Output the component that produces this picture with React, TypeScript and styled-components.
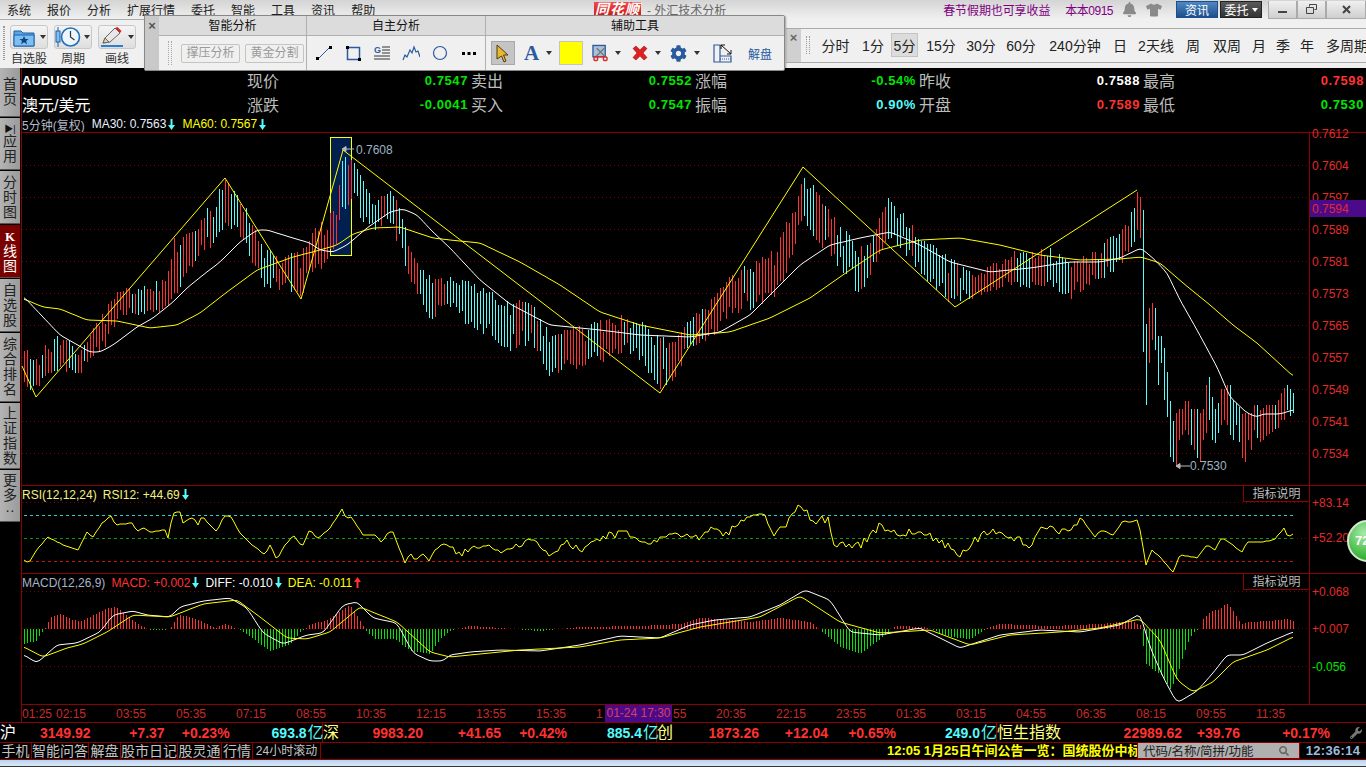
import React from "react";
import styled, { createGlobalStyle } from "styled-components";
import { FaBell, FaCog, FaSearch, FaTshirt, FaWrench } from "react-icons/fa";

const FONT = '"Liberation Sans", "Noto Sans CJK SC", sans-serif';
const LINE = "#8b0000";
const GRID = "#780000";
const AXIS = "#e02b2b";
const RED = "#ff3232";
const GREEN = "#00e600";
const CYAN = "#54fcfc";
const YELLOW = "#ffff00";

type Pt = [number, number];

const GlobalStyle = createGlobalStyle`
  html, body { margin: 0; padding: 0; background: #000; overflow: hidden; }
  * { box-sizing: border-box; }
`;

const Page = styled.div`
  position: relative;
  width: 1366px;
  height: 767px;
  overflow: hidden;
  background: #000;
  font-family: ${FONT};
  display: flex;
  flex-direction: column;
`;

/* title bar */
const TitleBar = styled.div`
  height: 19px;
  flex: none;
  display: flex;
  align-items: center;
  background: linear-gradient(#d4d4d4, #f0f0f0);
  font-size: 12px;
  color: #222;
`;
const Menu = styled.div`
  width: 594px;
  padding-left: 7px;
  display: flex;
  gap: 16px;
`;
const Logo = styled.span`
  width: 47px;
  height: 15px;
  line-height: 15px;
  text-align: center;
  color: #fff;
  font-weight: bold;
  font-style: italic;
  font-size: 14px;
  letter-spacing: 1px;
  background: linear-gradient(#f24b4b, #c81414);
`;
const AppName = styled.span`
  margin-left: 6px;
  color: #666;
`;
const TitleRight = styled.div`
  margin-left: auto;
  display: flex;
  align-items: center;
  height: 100%;
`;
const Promo = styled.span<{ $ml: number }>`
  margin-left: ${(p) => p.$ml}px;
  color: #800080;
  letter-spacing: -0.1px;
`;
const Account = styled(Promo)`
  letter-spacing: -0.5px;
`;
const GrayIcon = styled.span<{ $ml: number; $size: number }>`
  margin-left: ${(p) => p.$ml}px;
  display: flex;
  color: #8a8a8a;
  font-size: ${(p) => p.$size}px;
`;
const BarButton = styled.span<{ $dark?: boolean; $ml: number }>`
  margin-left: ${(p) => p.$ml}px;
  width: 42px;
  height: 17px;
  display: flex;
  align-items: center;
  justify-content: center;
  gap: 3px;
  color: #fff;
  font-size: 12px;
  border: 1px solid ${(p) => (p.$dark ? "#222" : "#1d4f8c")};
  background: ${(p) =>
    p.$dark ? "linear-gradient(#5a5a5a, #333)" : "linear-gradient(#4f88c4, #1d4f8c)"};
`;
const WinButtons = styled.div`
  margin-left: 6px;
  display: flex;
  height: 18px;
`;
const WinButton = styled.span<{ $w: number }>`
  width: ${(p) => p.$w}px;
  display: flex;
  align-items: center;
  justify-content: center;
  border: 1px solid #aaa;
  border-top: 0;
  background: linear-gradient(#f0f0f0, #cfcfcf);
`;

/* tool rows */
const ToolRow = styled.div`
  height: 49px;
  flex: none;
  display: flex;
  background: #f0f0f0;
`;
const LeftTools = styled.div`
  flex: 0 0 144px;
  padding: 5px 0 0 3px;
  display: flex;
  gap: 6px;
  border-top: 1px solid #aaa;
`;
const Grip = styled.span`
  width: 2px;
  height: 34px;
  margin-top: 1px;
  margin-right: -1px;
  border-left: 1px dotted #999;
  border-right: 1px dotted #999;
`;
const ToolGroup = styled.div`
  width: 38px;
  display: flex;
  flex-direction: column;
  align-items: center;
  font-size: 12px;
  color: #333;
  line-height: 17px;
`;
const SplitButton = styled.div`
  width: 38px;
  height: 25px;
  margin-bottom: 2px;
  display: grid;
  grid-template-columns: 26px 11px;
  align-items: center;
  justify-items: center;
  border: 1px solid #c8c8c8;
  border-radius: 3px;
  background: linear-gradient(#f4f4f4, #dedede);
`;
const Caret = styled.span<{ $c?: string }>`
  width: 0;
  height: 0;
  border-left: 3.5px solid transparent;
  border-right: 3.5px solid transparent;
  border-top: 4px solid ${(p) => p.$c ?? "#333"};
`;
const Spacer = styled.div`
  flex: 0 0 642px;
`;
const PeriodBar = styled.div`
  flex: 1;
  min-width: 0;
  display: flex;
  align-items: stretch;
  border-top: 1px solid #aaa;
  margin-top: 9px;
  height: 35px;
  border-bottom: 1px solid #aaa;
  overflow: hidden;
  color: #222;
  font-size: 14px;
`;
const CloseStrip = styled.span`
  flex: 0 0 15px;
  display: flex;
  align-items: flex-start;
  justify-content: center;
  padding-top: 2px;
  background: #d0d0d0;
  color: #666;
  font-weight: bold;
  font-size: 13px;
  line-height: 13px;
`;
const PeriodGrip = styled.span`
  flex: 0 0 4px;
  height: 18px;
  margin: 7px 6px 0 5px;
  border-left: 1px dotted #999;
  border-right: 1px dotted #999;
`;
const Period = styled.span<{ $w: number; $on?: boolean }>`
  flex: 0 0 ${(p) => p.$w}px;
  display: flex;
  align-items: center;
  justify-content: center;
  white-space: nowrap;
  padding-bottom: 2px;
  ${(p) => (p.$on ? "background:#dcdcdc;border:1px solid #c4c4c4;margin:4px 0 5px;padding-bottom:0;" : "")}
`;

/* floating toolbar */
const Floating = styled.div`
  position: absolute;
  left: 144px;
  top: 15px;
  width: 641px;
  height: 56px;
  display: flex;
  background: #f0f0f0;
  border: 1px solid #888;
  border-radius: 2px;
  box-shadow: 1px 1px 2px rgba(0, 0, 0, 0.35);
`;
const FloatClose = styled.span`
  width: 14px;
  padding-top: 3px;
  text-align: center;
  background: #c9c9c9;
  color: #555;
  font-weight: bold;
  font-size: 13px;
  line-height: 13px;
`;
const Section = styled.div<{ $w: number }>`
  flex: 0 0 ${(p) => p.$w}px;
  display: flex;
  flex-direction: column;
  border-right: 1px solid #b0b0b0;
  &:last-child { border-right: 0; flex: 1; }
`;
const SectionHead = styled.div`
  height: 20px;
  line-height: 20px;
  text-align: center;
  font-size: 12px;
  color: #111;
  background: #dcdcdc;
  border-bottom: 1px solid #b0b0b0;
`;
const SectionBody = styled.div<{ $pad: number; $gap: number }>`
  flex: 1;
  display: flex;
  align-items: center;
  padding-left: ${(p) => p.$pad}px;
  gap: ${(p) => p.$gap}px;
`;
const BodyGrip = styled.span`
  width: 4px;
  height: 24px;
  margin-right: 4px;
  border-left: 1px dotted #aaa;
  border-right: 1px dotted #aaa;
`;
const GhostButton = styled.span`
  width: 59px;
  height: 19px;
  line-height: 17px;
  text-align: center;
  font-size: 12px;
  color: #999;
  border: 1px solid #c4c4c4;
  border-radius: 2px;
`;
const Slot = styled.span<{ $ml: number; $w: number; $on?: boolean }>`
  margin-left: ${(p) => p.$ml}px;
  width: ${(p) => p.$w}px;
  height: 24px;
  flex: none;
  display: flex;
  align-items: center;
  justify-content: center;
  ${(p) => (p.$on ? "background:#c4c4c4;border:1px solid #a8a8a8;" : "")}
`;
const Swatch = styled.span`
  margin-left: 7px;
  width: 24px;
  height: 24px;
  flex: none;
  background: ${YELLOW};
  border: 1px solid #c4c4c4;
`;
const LetterA = styled.span`
  font-family: "Liberation Serif", serif;
  font-weight: bold;
  font-size: 21px;
  color: #2a5a9e;
`;
const BlueLabel = styled.span`
  margin-left: 16px;
  font-size: 12px;
  color: #1f5a9e;
`;

/* main area */
const Main = styled.div`
  height: 654px;
  flex: none;
  display: flex;
`;
const Sidebar = styled.div`
  flex: 0 0 22px;
  border-right: 1px solid ${LINE};
  display: flex;
  flex-direction: column;
`;
const Tab = styled.div<{ $h: number; $on?: boolean }>`
  height: ${(p) => p.$h}px;
  width: 20px;
  margin-bottom: 1px;
  display: flex;
  flex-direction: column;
  align-items: center;
  justify-content: center;
  font-size: 14px;
  line-height: 15px;
  text-align: center;
  word-break: break-all;
  color: ${(p) => (p.$on ? "#fff" : "#222")};
  background: ${(p) => (p.$on ? "#7a0000" : "linear-gradient(90deg, #b4b4b4, #9a9a9a)")};
  border-bottom: 1px solid #555;
`;
const TabText = styled.span`
  width: 15px;
`;
const TabIcon = styled.span`
  font-size: 9px;
  line-height: 10px;
  color: #111;
`;
const KLetter = styled.b`
  font-family: "Liberation Serif", serif;
  font-size: 13px;
`;
const Content = styled.div`
  flex: 1;
  min-width: 0;
  display: flex;
  flex-direction: column;
`;
const Quote = styled.div`
  height: 48px;
  flex: none;
  display: grid;
  grid-template-columns: 225px repeat(5, 224px);
  grid-auto-rows: 24px;
`;
const QuoteName = styled.span<{ $bold?: boolean }>`
  display: flex;
  align-items: center;
  color: #fff;
  font-size: ${(p) => (p.$bold ? 13 : 16)}px;
  font-weight: ${(p) => (p.$bold ? "bold" : "normal")};
`;
const QuoteCell = styled.div`
  padding-right: 3px;
  display: flex;
  justify-content: space-between;
  align-items: center;
`;
const QuoteLabel = styled.span`
  color: #bcbcbc;
  font-size: 16px;
`;
const QuoteValue = styled.span<{ $c: string }>`
  color: ${(p) => p.$c};
  font-size: 13px;
  font-weight: bold;
  letter-spacing: 0.6px;
`;
const LegendRow = styled.div`
  height: 16px;
  flex: none;
  display: flex;
  align-items: center;
  gap: 7px;
  font-size: 12px;
  white-space: nowrap;
`;
const LegendText = styled.span<{ $c: string }>`
  color: ${(p) => p.$c};
  display: inline-flex;
  align-items: center;
  gap: 2px;
`;
const Pane = styled.div<{ $h: number }>`
  position: relative;
  height: ${(p) => p.$h}px;
  border-top: 1px solid ${LINE};
  flex: none;
`;
const PaneLegend = styled(LegendRow)`
  position: absolute;
  left: 0;
  top: 0;
  z-index: 2;
  height: 15px;
  margin-top: 1px;
  gap: 6px;
`;
const HelpBox = styled.span`
  position: absolute;
  right: 57px;
  top: 0;
  width: 66px;
  height: 16px;
  line-height: 16px;
  font-size: 12px;
  text-align: center;
  color: #bcbcbc;
  border-left: 1px solid ${LINE};
  border-bottom: 1px solid ${LINE};
  background: #000;
`;
const Plot = styled.svg`
  display: block;
  position: absolute;
  left: 0;
  top: -1px;
  overflow: visible;
  font-family: ${FONT};
  font-size: 12px;
`;
const TimeAxis = styled.div`
  position: relative;
  height: 18px;
  flex: none;
  border-top: 1px solid ${LINE};
  display: flex;
  align-items: center;
  font-size: 12px;
  color: #c92a2a;
  overflow: hidden;
  white-space: nowrap;
`;
const TimeLabel = styled.span<{ $w: number }>`
  flex: 0 0 ${(p) => p.$w}px;
`;
const TimeBadge = styled.span`
  position: absolute;
  left: 583px;
  top: 0;
  width: 67px;
  height: 17px;
  line-height: 17px;
  text-align: center;
  color: #d8405a;
  background: #4b0a8a;
`;

/* ticker + status */
const Ticker = styled.div`
  height: 20px;
  flex: none;
  display: grid;
  grid-template-columns: 323px 334px 340px 1fr;
  border-top: 1px solid ${LINE};
`;
const TickerGroup = styled.div`
  display: flex;
  align-items: center;
  border-right: 1px solid ${LINE};
  &:last-child { border-right: 0; }
`;
const TickerName = styled.span<{ $w: number; $c: string }>`
  flex: 0 0 ${(p) => p.$w}px;
  color: ${(p) => p.$c};
  font-size: 16px;
  line-height: 18px;
`;
const TickerNum = styled.span<{ $w: number; $c?: string }>`
  flex: 0 0 ${(p) => p.$w}px;
  text-align: right;
  color: ${(p) => p.$c ?? RED};
  font-size: 14px;
  font-weight: bold;
`;
const TickerUnit = styled.span`
  flex: 0 0 16px;
  color: ${CYAN};
  font-size: 16px;
  line-height: 18px;
  padding-left: 1px;
`;
const Wrench = styled.span`
  margin-left: 20px;
  display: flex;
  color: #777;
  font-size: 12px;
`;
const StatusBar = styled.div`
  height: 17px;
  flex: none;
  display: flex;
  align-items: stretch;
  border-top: 1px solid ${LINE};
  font-size: 13px;
  color: #c4c4c4;
  white-space: nowrap;
`;
const StatusTab = styled.span<{ $w: number; $small?: boolean }>`
  flex: 0 0 ${(p) => p.$w}px;
  text-align: center;
  line-height: 16px;
  font-size: ${(p) => (p.$small ? 12 : 14)}px;
  border-right: 1px solid ${LINE};
`;
const Marquee = styled.div`
  flex: 0 0 250px;
  margin-left: auto;
  overflow: hidden;
  line-height: 16px;
  color: ${YELLOW};
  font-weight: bold;
  font-size: 13px;
`;
const SearchBox = styled.div`
  flex: 0 0 163px;
  padding: 0 10px 0 5px;
  display: flex;
  align-items: center;
  justify-content: space-between;
  background: #b0b0b0;
  color: #222;
  border: 1px solid ${LINE};
  border-top: 0;
  font-size: 12.5px;
`;
const SearchIcon = styled.span`
  display: flex;
  color: #666;
  font-size: 10px;
`;
const Clock = styled.div`
  flex: 0 0 66px;
  text-align: center;
  line-height: 16px;
  color: #9dbbdc;
  font-size: 13px;
  font-weight: bold;
  letter-spacing: 0.3px;
`;
const Taskbar = styled.div`
  height: 8px;
  flex: none;
  background: linear-gradient(#b7d3ef, #dce9f7);
  border-top: 1px solid ${LINE};
  border-bottom: 1px solid #333;
`;
const Ball = styled.div`
  position: absolute;
  left: 1347px;
  top: 520px;
  width: 42px;
  height: 42px;
  padding: 11px 0 0 6px;
  border-radius: 50%;
  border: 2px solid #d8e8d8;
  background: radial-gradient(circle at 40% 30%, #a8eaa8, #35b335 70%);
  color: #fff;
  font-size: 13px;
  font-weight: bold;
`;

/* chart data, in page coordinates */
const rnd = (n: number) => {
  const v = Math.sin(n * 12.9898) * 43758.5453;
  return v - Math.floor(v);
};
const lerp = (pts: number[][], x: number, col = 1) => {
  if (x <= pts[0][0]) return pts[0][col];
  for (let i = 1; i < pts.length; i++) {
    if (x <= pts[i][0]) {
      const t = (x - pts[i - 1][0]) / (pts[i][0] - pts[i - 1][0]);
      return pts[i - 1][col] + t * (pts[i][col] - pts[i - 1][col]);
    }
  }
  return pts[pts.length - 1][col];
};
const toLine = (pts: number[][]) => pts.map((p) => `${p[0]},${p[1].toFixed(1)}`).join(" ");
// the averages are smooth curves, so round off the corners of the hand-read points
const smooth = (pts: Pt[]): Pt[] => {
  const out: Pt[] = [];
  for (let x = pts[0][0]; x <= pts[pts.length - 1][0]; x += 3) {
    out.push([x, (lerp(pts, x - 3) + lerp(pts, x) * 2 + lerp(pts, x + 3)) / 4]);
  }
  return out;
};

const BAND = [
  [24,340,387],[36,357,397],[45,343,377],[60,332,370],[80,352,377],[90,332,360],[105,307,348],[120,287,315],
  [140,287,317],[165,278,310],[175,233,300],[185,230,275],[205,210,255],[225,180,227],[240,190,238],[250,218,260],
  [265,247,290],[280,257,290],[300,250,300],[310,233,277],[320,222,273],[335,202,247],[343,150,220],[350,150,202],
  [360,173,220],[375,198,230],[390,185,227],[400,202,250],[410,250,283],[420,267,300],[430,273,323],[445,275,307],
  [470,280,330],[490,290,340],[510,300,352],[530,300,345],[549,330,380],[565,330,370],[580,325,370],[600,320,365],
  [620,315,355],[640,320,360],[660,335,392],[675,340,380],[690,310,350],[710,300,340],[730,275,315],[750,260,310],
  [770,250,305],[785,225,280],[803,170,220],[820,195,250],[840,225,270],[860,245,298],[875,225,265],[887,197,240],
  [905,215,255],[925,240,280],[950,255,305],[970,270,300],[990,265,295],[1010,250,285],[1030,250,290],[1050,245,285],
  [1070,260,300],[1090,250,285],[1110,235,275],[1125,225,260],[1137,190,240],[1141,194,240],
];
// the sharp drop and the tail are read candle by candle: top, bottom, 1 = red
const TAIL = [
  [210,352,0],[324,405,0],[308,363,1],[303,340,1],[308,350,0],[336,385,0],[336,363,0],[348,400,0],[372,417,0],
  [401,457,0],[421,462,0],[413,465,1],[409,440,1],[409,435,1],[401,430,1],[401,435,1],[409,445,0],[409,450,1],
  [409,458,0],[413,462,1],[409,440,1],[385,433,1],[377,420,0],[397,440,0],[409,443,0],[403,433,0],[389,425,1],
  [389,420,1],[385,425,1],[385,435,0],[400,440,0],[403,425,0],[407,442,0],[414,458,1],[413,462,1],[413,440,1],
  [413,450,1],[405,430,1],[405,438,0],[410,442,1],[408,440,1],[405,436,1],[405,434,1],[405,432,1],[405,429,0],
  [400,428,1],[393,420,1],[388,420,1],[385,410,0],[389,416,0],[393,413,0],
];
const buildCandles = () => {
  const out: { x: number; a: number; b: number; red: boolean }[] = [];
  const mid = (x: number) => (lerp(BAND, x, 1) + lerp(BAND, x, 2)) / 2;
  for (let x = 24, i = 0; x < 1143; x += 3, i++) {
    const t = lerp(BAND, x, 1);
    const b = lerp(BAND, x, 2);
    const len = (b - t) * (0.55 + 0.4 * rnd(i + 0.5));
    const a = t + (b - t - len) * rnd(i + 7.3);
    const rising = mid(x + 9) < mid(x - 9);
    const luck = rnd(Math.floor(i / 4) * 1.7 + 3) * 0.6 + rnd(i * 1.3) * 0.4;
    out.push({ x, a, b: a + len, red: luck < (rising ? 0.68 : 0.34) });
  }
  TAIL.forEach((c, i) => out.push({ x: 1143 + i * 3, a: c[0], b: c[1], red: c[2] === 1 }));
  return out;
};
const CANDLES = buildCandles();

const MA30: Pt[] = [[24,297],[60,335],[90,352],[100,352],[113,345],[137,327],[153,318],[173,302],[187,288],[203,275],[220,262],[240,242],[257,230],[267,230],[293,238],[310,243],[320,250],[333,252],[347,245],[367,228],[390,212],[403,209],[417,215],[433,232],[450,248],[480,280],[510,304],[550,325],[600,330],[640,335],[690,337],[720,332],[750,315],[780,285],[800,265],[830,245],[860,238],[890,232],[920,245],[950,262],[990,272],[1030,268],[1070,262],[1100,262],[1120,258],[1141,248],[1155,260],[1167,273],[1180,300],[1197,330],[1217,367],[1230,397],[1247,413],[1257,417],[1263,414],[1280,414],[1293,410]];
const MA60: Pt[] = [[24,299],[43,307],[60,309],[87,320],[117,321],[150,328],[177,325],[200,313],[227,292],[257,270],[293,257],[320,250],[337,245],[353,234],[373,228],[400,227],[433,238],[450,240],[480,243],[520,262],[560,285],[600,312],[640,325],[690,335],[730,332],[770,318],[810,298],[850,270],[880,250],[920,240],[960,238],[1000,245],[1040,255],[1080,260],[1120,259],[1141,257],[1160,263],[1183,283],[1210,305],[1233,325],[1257,343],[1293,376]];
const ZIGZAG: Pt[] = [[22,366],[36,397],[225,178],[301,299],[343,150],[660,393],[803,167],[955,307],[1137,190]];
const PRICE_TICKS: [string, number][] = [["0.7612",133],["0.7604",165],["0.7597",197],["0.7589",229],["0.7581",261],["0.7573",293],["0.7565",325],["0.7557",357],["0.7549",389],["0.7541",421],["0.7534",453]];

const RSI_BASE: Pt[] = [[24,560],[28,563],[32,558],[38,548],[48,537],[63,545],[78,550],[87,532],[93,537],[102,523],[112,515],[115,525],[133,523],[137,532],[143,527],[150,532],[165,530],[168,538],[173,513],[180,512],[183,523],[193,517],[198,525],[202,515],[207,522],[217,532],[223,517],[230,515],[240,533],[250,543],[265,555],[270,545],[277,560],[283,548],[293,535],[302,547],[310,529],[317,539],[330,528],[342,509],[347,520],[350,515],[363,535],[375,535],[382,543],[388,532],[393,532],[405,563],[410,553],[415,560],[423,554],[430,562],[433,552],[443,543],[450,547],[460,553],[480,548],[500,550],[520,545],[535,538],[548,555],[565,542],[580,552],[595,540],[610,535],[625,533],[640,540],[655,543],[670,535],[685,533],[700,538],[710,530],[725,535],[745,520],[762,512],[772,535],[785,525],[800,505],[812,520],[828,520],[835,545],[860,545],[880,525],[900,535],[920,530],[945,545],[960,555],[975,540],[990,530],[1010,535],[1030,545],[1045,525],[1060,533],[1080,520],[1095,535],[1103,530],[1113,535],[1123,521],[1130,522],[1137,520],[1142,537],[1145,567],[1152,550],[1160,557],[1173,572],[1180,555],[1197,558],[1207,545],[1215,550],[1222,537],[1242,552],[1247,542],[1263,542],[1275,539],[1284,528],[1288,537],[1293,534]];
const RSI_LINE = (() => {
  const out: Pt[] = [];
  for (let x = 24, i = 0; x <= 1293; x += 3, i++) {
    const noisy = x > 450 && x < 1100 ? (rnd(i + 0.9) - 0.5) * 8 : 0;
    out.push([x, Math.round(lerp(RSI_BASE, x) + noisy)]);
  }
  return out;
})();

const DIFF: Pt[] = [[24,655],[37,663],[57,645],[77,643],[100,632],[113,615],[133,611],[147,615],[170,617],[180,607],[203,601],[230,598],[247,608],[263,633],[283,644],[307,635],[323,633],[343,605],[357,602],[373,618],[397,623],[413,653],[430,661],[443,661],[450,655],[470,652],[500,650],[540,651],[580,645],[620,636],[660,638],[690,625],[715,620],[750,617],[780,605],[805,590],[830,600],[850,632],[880,635],[920,628],[960,648],[1000,635],[1040,630],[1080,632],[1120,625],[1140,614],[1150,647],[1163,677],[1177,703],[1197,691],[1213,673],[1227,655],[1243,655],[1267,643],[1293,632]];
const DEA: Pt[] = [[24,647],[43,657],[67,648],[83,644],[107,632],[133,615],[170,617],[203,604],[237,600],[260,617],[287,638],[307,639],[330,632],[360,607],[397,622],[430,652],[450,657],[470,655],[520,650],[580,647],[620,640],[660,638],[700,627],[760,617],[800,596],[840,622],[880,633],[930,630],[970,645],[1010,635],[1060,632],[1100,628],[1140,619],[1160,640],[1177,680],[1193,692],[1213,682],[1233,662],[1267,650],[1293,637]];
const HIST: Pt[] = [[24,-15],[36,-12],[42,-3],[46,2],[50,12],[60,15],[70,10],[80,7],[90,12],[105,20],[115,22],[125,15],[135,7],[145,1],[150,-1],[165,-1],[170,0],[178,14],[190,12],[200,8],[215,1],[225,5],[235,1],[240,-1],[260,-15],[270,-22],[290,-15],[300,-3],[305,0],[310,5],[325,8],[340,18],[350,24],[360,8],[365,-1],[375,-10],[395,-10],[410,-22],[430,-25],[440,-10],[450,-2],[470,3],[500,1],[540,-2],[580,2],[640,3],[680,5],[700,11],[720,10],[750,7],[780,11],[810,7],[825,-5],[840,-18],[860,-25],[880,-10],[895,3],[925,2],[950,-8],[970,-10],[985,0],[1000,5],[1050,3],[1100,5],[1130,8],[1141,4],[1143,-17],[1146,-35],[1152,-40],[1160,-45],[1170,-60],[1176,-50],[1182,-30],[1188,-13],[1193,-3],[1200,0],[1203,10],[1210,17],[1220,20],[1225,25],[1228,25],[1235,15],[1241,5],[1250,7],[1270,8],[1285,10],[1293,8]];
const HIST_BARS = (() => {
  const out: { x: number; v: number }[] = [];
  for (let x = 24; x <= 1293; x += 3) {
    out.push({ x, v: Math.round(lerp(HIST, x)) });
  }
  return out;
})();

const Down = ({ c }: { c: string }) => (
  <svg width="7" height="11" viewBox="0 0 7 11"><path d="M2.5 0h2v6H7L3.5 11 0 6h2.5z" fill={c} /></svg>
);
const Up = ({ c }: { c: string }) => (
  <svg width="7" height="11" viewBox="0 0 7 11"><path d="M2.5 11h2V5H7L3.5 0 0 5h2.5z" fill={c} /></svg>
);

const DottedGrid = ({ ys }: { ys: number[] }) => (
  <>
    {ys.map((y) => (
      <line key={y} x1="22" x2="1309" y1={y + 0.5} y2={y + 0.5} stroke={GRID} strokeDasharray="1 3" />
    ))}
  </>
);
const AxisLine = ({ y1, y2 }: { y1: number; y2: number }) => (
  <line x1="1309.5" x2="1309.5" y1={y1} y2={y2} stroke={LINE} />
);

const PricePlot = () => (
  <Plot width="1344" height="353" viewBox="22 132 1344 353">
    <DottedGrid ys={PRICE_TICKS.slice(1).map((t) => t[1])} />
    <rect x="330.5" y="137.5" width="21" height="118" fill="#02204f" stroke={YELLOW} />
    {CANDLES.map((c) => (
      <rect key={c.x} x={c.x} y={c.a} width="1" height={c.b - c.a} fill={c.red ? RED : CYAN} shapeRendering="crispEdges" />
    ))}
    <polyline points={toLine(smooth(MA60))} fill="none" stroke={YELLOW} />
    <polyline points={toLine(smooth(MA30))} fill="none" stroke="#fff" />
    <polyline points={toLine(ZIGZAG)} fill="none" stroke={YELLOW} />
    <path d="M342 149l4-2.5v5zM346 149h8" stroke="#bbb" fill="#bbb" />
    <text x="356" y="154" fill="#9fb2c4">0.7608</text>
    <path d="M1176 466l4-2.5v5zM1180 466h10" stroke="#bbb" fill="#bbb" />
    <text x="1190" y="470" fill="#9fb2c4">0.7530</text>
    <AxisLine y1={132} y2={485} />
    {PRICE_TICKS.map(([t, y]) => (
      <text key={t} x="1312" y={y + 5} fill={AXIS}>{t}</text>
    ))}
    <rect x="1310" y="200" width="56" height="17" fill="#4b0a8a" />
    <text x="1312" y="213" fill={AXIS}>0.7594</text>
  </Plot>
);

const RsiPlot = () => (
  <Plot width="1344" height="88" viewBox="22 485 1344 88">
    <DottedGrid ys={[502]} />
    <line x1="24" x2="1293" y1="515.5" y2="515.5" stroke="#33cccc" strokeDasharray="3 3" />
    <line x1="24" x2="1293" y1="538.5" y2="538.5" stroke="#0a9a0a" strokeDasharray="3 3" />
    <line x1="1293" x2="1309" y1="538.5" y2="538.5" stroke={GRID} strokeDasharray="1 3" />
    <line x1="24" x2="1293" y1="561.5" y2="561.5" stroke="#c81414" strokeDasharray="3 3" />
    <polyline points={toLine(RSI_LINE)} fill="none" stroke={YELLOW} />
    <AxisLine y1={485} y2={573} />
    <text x="1312" y="507" fill={AXIS}>+83.14</text>
    <text x="1312" y="542" fill={AXIS}>+52.20</text>
  </Plot>
);

const MacdPlot = () => (
  <Plot width="1344" height="131" viewBox="22 573 1344 131">
    <DottedGrid ys={[591, 628, 666]} />
    {HIST_BARS.map((b) =>
      b.v === 0 ? null : (
        <rect
          key={b.x}
          x={b.x}
          y={b.v > 0 ? 629 - b.v : 629}
          width="1"
          height={Math.abs(b.v)}
          fill={b.v > 0 ? RED : GREEN}
          shapeRendering="crispEdges"
        />
      ),
    )}
    <polyline points={toLine(smooth(DIFF))} fill="none" stroke="#fff" />
    <polyline points={toLine(smooth(DEA))} fill="none" stroke={YELLOW} />
    <AxisLine y1={573} y2={704} />
    <text x="1312" y="596" fill={AXIS}>+0.068</text>
    <text x="1312" y="633" fill={AXIS}>+0.007</text>
    <text x="1312" y="671" fill={GREEN}>-0.056</text>
  </Plot>
);

/* toolbar drawings */
const FolderIcon = () => (
  <svg width="22" height="19" viewBox="0 0 22 19">
    <path d="M1 3h7l2 2h11v13H1z" fill="#5ba6e8" stroke="#1d5fa8" />
    <path d="M1 7h20v11H1z" fill="#7cc0f2" stroke="#1d5fa8" />
    <path d="M11 8l1.4 3h3.2l-2.5 2 1 3.2L11 14.3l-3 1.9 1-3.2-2.5-2h3.2z" fill="#123f80" />
  </svg>
);
const PeriodIcon = () => (
  <svg width="26" height="20" viewBox="0 0 26 20">
    <path d="M3 0v20" stroke="#1f5fa8" />
    <rect x="1" y="4" width="4" height="11" fill="#7cc0f2" stroke="#1f5fa8" />
    <circle cx="15.5" cy="10" r="9" fill="#eef6fd" stroke="#1f6fb8" strokeWidth="1.6" />
    <path d="M15.5 4v6l4 3" fill="none" stroke="#333" strokeWidth="1.2" />
  </svg>
);
const PencilIcon = () => (
  <svg width="22" height="20" viewBox="0 0 22 20">
    <path d="M2 16l2-5L14 1l5 5L9 15z" fill="#e8e8e8" stroke="#666" />
    <path d="M14 1l5 5 1.5-2-4-4z" fill="#d02828" />
    <path d="M2 16l2-5 4 4z" fill="#f0d0a0" stroke="#666" />
    <path d="M0 19h22" stroke="#2a7fd0" strokeWidth="2" />
  </svg>
);
const LineTool = () => (
  <svg width="18" height="18" viewBox="0 0 18 18">
    <path d="M3 15L15 3" stroke="#2d5a9e" />
    <rect x="1" y="13" width="3" height="3" /><rect x="14" y="2" width="3" height="3" />
  </svg>
);
const RectTool = () => (
  <svg width="18" height="18" viewBox="0 0 18 18">
    <rect x="3.5" y="3.5" width="12" height="12" fill="none" stroke="#2d5a9e" strokeWidth="1.5" />
    <rect x="2" y="2" width="3" height="3" /><rect x="14" y="14" width="3" height="3" />
  </svg>
);
const GannTool = () => (
  <svg width="18" height="18" viewBox="0 0 18 18" fontFamily={FONT} fontSize="9" fontWeight="bold">
    <text x="1" y="9" fill="#2d5a9e">G</text>
    <path d="M9 3h8M9 6h8M9 9h8M1 12h16M1 15h16" stroke="#333" />
  </svg>
);
const WaveTool = () => (
  <svg width="18" height="18" viewBox="0 0 18 18">
    <path d="M1 16l2-5 2 2 3-7 2 3 2-6 2 5 2-1 2 6" fill="none" stroke="#2d5a9e" strokeWidth="1.2" />
  </svg>
);
const CircleTool = () => (
  <svg width="18" height="18" viewBox="0 0 18 18">
    <circle cx="9" cy="9" r="6.5" fill="none" stroke="#2d5a9e" strokeWidth="1.2" />
  </svg>
);
const DotsTool = () => (
  <svg width="18" height="18" viewBox="0 0 18 18">
    <rect x="2" y="8" width="3" height="3" /><rect x="7.5" y="8" width="3" height="3" /><rect x="13" y="8" width="3" height="3" />
  </svg>
);
const CursorTool = () => (
  <svg width="14" height="19" viewBox="0 0 14 19">
    <path d="M1 1l11 10H7.5l2.5 6-2 1-2.5-6L1 15z" fill="#e8b830" stroke="#4a3a10" />
  </svg>
);
const EraseTool = () => (
  <svg width="18" height="18" viewBox="0 0 18 18">
    <rect x="1" y="1" width="13" height="12" fill="#a8c0d8" stroke="#2d5a9e" strokeWidth="1.4" />
    <path d="M5 4l9 9M13 4l-9 9" stroke="#777" strokeWidth="1.4" />
    <circle cx="4" cy="15" r="2" fill="none" stroke="#d03030" strokeWidth="1.5" />
    <circle cx="14" cy="15" r="2" fill="none" stroke="#d03030" strokeWidth="1.5" />
    <path d="M5 13l4 0 4 0" stroke="#d03030" strokeWidth="1.5" />
  </svg>
);
const DeleteTool = () => (
  <svg width="18" height="16" viewBox="0 0 18 16">
    <path d="M2 3.5L5 1l4 4 4-4 3 2.5L12 8l4 4.5-3 2.5-4-4-4 4-3-2.5L6 8z" fill="#e02020" stroke="#a01010" strokeWidth="0.6" />
  </svg>
);
const RulerTool = () => (
  <svg width="19" height="19" viewBox="0 0 19 19">
    <path d="M1 1h6v17H1zM7 12h11v6H7z" fill="none" stroke="#2d5a9e" strokeWidth="1.2" />
    <path d="M7 15h11" stroke="#2d5a9e" strokeDasharray="1 1" />
    <path d="M8 1l10 9M8 1h4M8 1v4M18 10h-4M18 10V6" fill="none" stroke="#111" />
  </svg>
);

const PERIODS: [string, number][] = [["分时",39],["1分",36],["5分",27],["15分",46],["30分",34],["60分",46],["240分钟",62],["日",28],["2天线",44],["周",30],["双周",38],["月",26],["季",22],["年",26],["多周期",54]];
const QUOTE_ROWS: [string, string, string][][] = [
  [["现价","0.7547",GREEN],["卖出","0.7552",GREEN],["涨幅","-0.54%",GREEN],["昨收","0.7588","#fff"],["最高","0.7598",RED]],
  [["涨跌","-0.0041",GREEN],["买入","0.7547",GREEN],["振幅","0.90%",CYAN],["开盘","0.7589",RED],["最低","0.7530",GREEN]],
];
const TIMES: [string, number][] = [["01:25",34],["02:15",60],["03:55",60],["05:35",60],["07:15",60],["08:55",60],["10:35",60],["12:15",60],["13:55",60],["15:35",60],["1",77],["55",43],["20:35",60],["22:15",60],["23:55",60],["01:35",60],["03:15",60],["04:55",60],["06:35",60],["08:15",60],["09:55",60],["11:35",60]];
const STATUS_TABS: [string, number][] = [["手机",32],["智能问答",56],["解盘",32],["股市日记",56],["股灵通",44],["行情",31]];

export default function App(): React.ReactElement {
  return (
    <Page>
      <GlobalStyle />
      <TitleBar>
        <Menu>
          {["系统","报价","分析","扩展行情","委托","智能","工具","资讯","帮助"].map((m) => (
            <span key={m}>{m}</span>
          ))}
        </Menu>
        <Logo>同花顺</Logo>
        <AppName>- 外汇技术分析</AppName>
        <TitleRight>
          <Promo $ml={0}>春节假期也可享收益</Promo>
          <Account $ml={15}>本本0915</Account>
          <GrayIcon $ml={9} $size={15}><FaBell /></GrayIcon>
          <GrayIcon $ml={9} $size={16}><FaTshirt /></GrayIcon>
          <BarButton $ml={14}>资讯</BarButton>
          <BarButton $ml={2} $dark>委托<Caret $c="#fff" /></BarButton>
          <WinButtons>
            <WinButton $w={29}><svg width="9" height="9"><path d="M0 7h9" stroke="#444" strokeWidth="2" /></svg></WinButton>
            <WinButton $w={29}><svg width="11" height="10"><path d="M3.5 2.5V.5h7v5h-2M.5 3.5h7v6h-7z" fill="none" stroke="#444" /></svg></WinButton>
            <WinButton $w={40}><svg width="9" height="9"><path d="M1 1l7 7M8 1L1 8" stroke="#444" strokeWidth="2" /></svg></WinButton>
          </WinButtons>
        </TitleRight>
      </TitleBar>

      <ToolRow>
        <LeftTools>
          <Grip />
          <ToolGroup>
            <SplitButton><FolderIcon /><Caret /></SplitButton>
            自选股
          </ToolGroup>
          <ToolGroup>
            <SplitButton><PeriodIcon /><Caret /></SplitButton>
            周期
          </ToolGroup>
          <ToolGroup>
            <SplitButton><PencilIcon /><Caret /></SplitButton>
            画线
          </ToolGroup>
        </LeftTools>
        <Spacer />
        <PeriodBar>
          <CloseStrip>×</CloseStrip>
          <PeriodGrip />
          {PERIODS.map(([label, w]) => (
            <Period key={label} $w={w} $on={label === "5分"}>{label}</Period>
          ))}
        </PeriodBar>
      </ToolRow>

      <Floating>
        <FloatClose>×</FloatClose>
        <Section $w={148}>
          <SectionHead>智能分析</SectionHead>
          <SectionBody $pad={9} $gap={5}>
            <BodyGrip />
            <GhostButton>撑压分析</GhostButton>
            <GhostButton>黄金分割</GhostButton>
          </SectionBody>
        </Section>
        <Section $w={179}>
          <SectionHead>自主分析</SectionHead>
          <SectionBody $pad={8} $gap={11}>
            <LineTool /><RectTool /><GannTool /><WaveTool /><CircleTool /><DotsTool />
          </SectionBody>
        </Section>
        <Section $w={300}>
          <SectionHead>辅助工具</SectionHead>
          <SectionBody $pad={0} $gap={0}>
            <Slot $ml={5} $w={24} $on><CursorTool /></Slot>
            <Slot $ml={9} $w={15}><LetterA>A</LetterA></Slot>
            <Slot $ml={6} $w={7}><Caret /></Slot>
            <Swatch />
            <Slot $ml={9} $w={17}><EraseTool /></Slot>
            <Slot $ml={5} $w={7}><Caret /></Slot>
            <Slot $ml={10} $w={18}><DeleteTool /></Slot>
            <Slot $ml={5} $w={7}><Caret /></Slot>
            <Slot $ml={9} $w={17}><FaCog color="#2a5a9e" size={17} /></Slot>
            <Slot $ml={6} $w={7}><Caret /></Slot>
            <Slot $ml={13} $w={19}><RulerTool /></Slot>
            <BlueLabel>解盘</BlueLabel>
          </SectionBody>
        </Section>
      </Floating>

      <Main>
        <Sidebar>
          <Tab $h={49}><TabText>首页</TabText></Tab>
          <Tab $h={52}><TabIcon>▶|</TabIcon><TabText>应用</TabText></Tab>
          <Tab $h={53}><TabText>分时图</TabText></Tab>
          <Tab $h={53} $on><TabText><KLetter>K</KLetter>线图</TabText></Tab>
          <Tab $h={53}><TabText>自选股</TabText></Tab>
          <Tab $h={69}><TabText>综合排名</TabText></Tab>
          <Tab $h={66}><TabText>上证指数</TabText></Tab>
          <Tab $h={52}><TabText>更多··</TabText></Tab>
        </Sidebar>
        <Content>
          <Quote>
            <QuoteName $bold>AUDUSD</QuoteName>
            {QUOTE_ROWS[0].map(([l, v, c]) => (
              <QuoteCell key={l}><QuoteLabel>{l}</QuoteLabel><QuoteValue $c={c}>{v}</QuoteValue></QuoteCell>
            ))}
            <QuoteName>澳元/美元</QuoteName>
            {QUOTE_ROWS[1].map(([l, v, c]) => (
              <QuoteCell key={l}><QuoteLabel>{l}</QuoteLabel><QuoteValue $c={c}>{v}</QuoteValue></QuoteCell>
            ))}
          </Quote>
          <LegendRow>
            <LegendText $c="#b4b8c8">5分钟(复权)</LegendText>
            <LegendText $c="#e8f0ff">MA30: 0.7563 <Down c={CYAN} /></LegendText>
            <LegendText $c={YELLOW}>MA60: 0.7567 <Down c={CYAN} /></LegendText>
          </LegendRow>
          <Pane $h={353}><PricePlot /></Pane>
          <Pane $h={88}>
            <RsiPlot />
            <PaneLegend>
              <LegendText $c="#f4f080">RSI(12,12,24)</LegendText>
              <LegendText $c="#f4f080">RSI12: +44.69 <Down c={CYAN} /></LegendText>
            </PaneLegend>
            <HelpBox>指标说明</HelpBox>
          </Pane>
          <Pane $h={131}>
            <MacdPlot />
            <PaneLegend>
              <LegendText $c="#a8b4c8">MACD(12,26,9)</LegendText>
              <LegendText $c={RED}>MACD: +0.002 <Down c={CYAN} /></LegendText>
              <LegendText $c="#fff">DIFF: -0.010 <Down c={CYAN} /></LegendText>
              <LegendText $c={YELLOW}>DEA: -0.011 <Up c={RED} /></LegendText>
            </PaneLegend>
            <HelpBox>指标说明</HelpBox>
          </Pane>
          <TimeAxis>
            {TIMES.map(([t, w], i) => (
              <TimeLabel key={i} $w={w}>{t}</TimeLabel>
            ))}
            <TimeBadge>01-24 17:30</TimeBadge>
          </TimeAxis>
        </Content>
      </Main>

      <Ticker>
        <TickerGroup>
          <TickerName $w={40} $c="#fff">沪</TickerName>
          <TickerNum $w={50}>3149.92</TickerNum>
          <TickerNum $w={74}>+7.37</TickerNum>
          <TickerNum $w={65}>+0.23%</TickerNum>
          <TickerNum $w={77} $c={CYAN}>693.8</TickerNum>
          <TickerUnit>亿</TickerUnit>
        </TickerGroup>
        <TickerGroup>
          <TickerName $w={16} $c="#ffff80">深</TickerName>
          <TickerNum $w={84}>9983.20</TickerNum>
          <TickerNum $w={78}>+41.65</TickerNum>
          <TickerNum $w={66}>+0.42%</TickerNum>
          <TickerNum $w={75} $c={CYAN}>885.4</TickerNum>
          <TickerUnit>亿</TickerUnit>
        </TickerGroup>
        <TickerGroup>
          <TickerName $w={16} $c="#ffff80">创</TickerName>
          <TickerNum $w={86}>1873.26</TickerNum>
          <TickerNum $w={69}>+12.04</TickerNum>
          <TickerNum $w={68}>+0.65%</TickerNum>
          <TickerNum $w={84} $c={CYAN}>249.0</TickerNum>
          <TickerUnit>亿</TickerUnit>
        </TickerGroup>
        <TickerGroup>
          <TickerName $w={67} $c="#ffff80">恒生指数</TickerName>
          <TickerNum $w={118}>22989.62</TickerNum>
          <TickerNum $w={58}>+39.76</TickerNum>
          <TickerNum $w={90}>+0.17%</TickerNum>
          <Wrench><FaWrench /></Wrench>
        </TickerGroup>
      </Ticker>
      <StatusBar>
        {STATUS_TABS.map(([t, w]) => (
          <StatusTab key={t} $w={w}>{t}</StatusTab>
        ))}
        <StatusTab $w={68} $small>24小时滚动</StatusTab>
        <Marquee>12:05 1月25日午间公告一览：国统股份中标合同</Marquee>
        <SearchBox>
          代码/名称/简拼/功能
          <SearchIcon><FaSearch /></SearchIcon>
        </SearchBox>
        <Clock>12:36:14</Clock>
      </StatusBar>
      <Taskbar />
      <Ball>72</Ball>
    </Page>
  );
}
